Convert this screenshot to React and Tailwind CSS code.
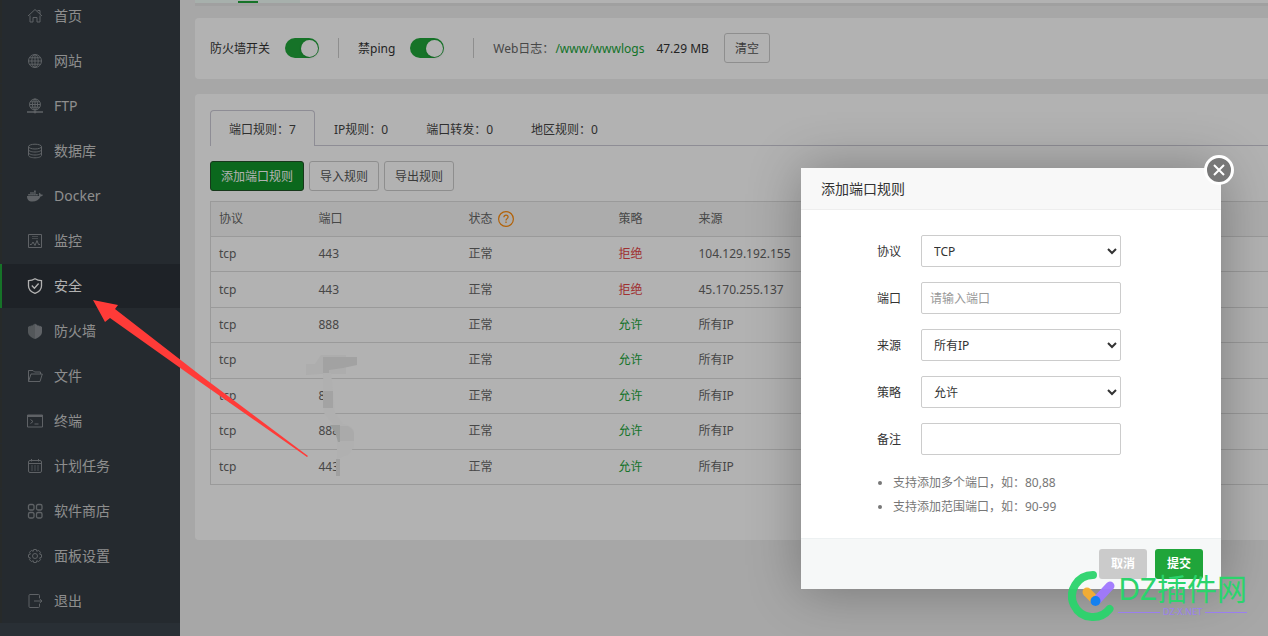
import React, {useState} from "react";
import {FaDocker} from "react-icons/fa";

const menu = [
  {name: "首页", icon: "home"},
  {name: "网站", icon: "site"},
  {name: "FTP", icon: "ftp"},
  {name: "数据库", icon: "database"},
  {name: "Docker", icon: "docker"},
  {name: "监控", icon: "monitor"},
  {name: "安全", icon: "safe", active: true},
  {name: "防火墙", icon: "firewall"},
  {name: "文件", icon: "folder"},
  {name: "终端", icon: "terminal"},
  {name: "计划任务", icon: "calendar"},
  {name: "软件商店", icon: "store"},
  {name: "面板设置", icon: "gear"},
  {name: "退出", icon: "exit"},
];

const tabs = [
  {name: "端口规则", count: 7},
  {name: "IP规则", count: 0},
  {name: "端口转发", count: 0},
  {name: "地区规则", count: 0},
];

const rules = [
  {port: "443", allow: false, source: "104.129.192.155"},
  {port: "443", allow: false, source: "45.170.255.137"},
  {port: "888", allow: true, source: "所有IP"},
  {port: "", allow: true, source: "所有IP"},
  {port: "88", allow: true, source: "所有IP"},
  {port: "888", allow: true, source: "所有IP"},
  {port: "443", allow: true, source: "所有IP"},
];

const icons = {
  home: (
    <path d="M1 8 8 1.5 15 8M10.5 2.5H13V6M3 7.5V14h3V9.5h4V14h3V7.5" />
  ),
  site: (
    <>
      <circle cx="8" cy="8" r="6.5" />
      <ellipse cx="8" cy="8" rx="3.2" ry="6.5" />
      <path d="M8 1.5v13M1.5 8h13M2.5 4.8h11M2.5 11.2h11" />
    </>
  ),
  ftp: (
    <>
      <circle cx="8" cy="6.5" r="5.5" />
      <ellipse cx="8" cy="6.5" rx="2.6" ry="5.5" />
      <path d="M8 1v11M2.5 6.5h11M3.2 3.8h9.6M3.2 9.2h9.6" />
      <path d="M0 14h16M6 14h4" strokeWidth="1.4" />
      <circle cx="8" cy="14" r="1" fill="currentColor" />
    </>
  ),
  database: (
    <>
      <ellipse cx="8" cy="3.6" rx="6.5" ry="2.4" />
      <path d="M1.5 3.6v8.8c0 1.3 2.9 2.4 6.5 2.4s6.5-1.1 6.5-2.4V3.6" />
      <path d="M1.5 6.6C1.5 7.9 4.4 9 8 9s6.5-1.1 6.5-2.4M1.5 9.6C1.5 10.9 4.4 12 8 12s6.5-1.1 6.5-2.4" />
    </>
  ),
  monitor: (
    <>
      <path d="M1.5 1.5h13v13h-13z" />
      <path d="M5 3.5h6M5 5.5h6" opacity="0.6" />
      <path d="M3 11.5h1.5l1.5-2.5 2 3.5 2-5 1.5 4H13" />
    </>
  ),
  safe: (
    <>
      <path d="M8 .8c2 1.4 4.3 1.9 6.5 1.9V8c0 3.5-3 6-6.5 7.3C4.5 14 1.5 11.5 1.5 8V2.7C3.7 2.7 6 2.2 8 .8z" strokeWidth="1.3" />
      <path d="m4.8 7.5 2.6 2.7 4.2-4.7" strokeWidth="1.3" />
    </>
  ),
  firewall: (
    <>
      <path d="M8 .5 6.5 2V1L5 3V2L3.5 3.5v-1L1 4v5c0 3 3 5.5 7 7z" fill="currentColor" stroke="none" opacity="0.8" />
      <path d="M8 .5 9.5 2V1L11 3V2l1.5 1.5v-1L15 4v5c0 3-3 5.5-7 7z" fill="currentColor" stroke="none" />
    </>
  ),
  folder: (
    <path d="M1.5 13.5v-11h4.5l1.5 1.5h6V6M1.5 13.5 4 6h11.3l-2.3 7.5z" />
  ),
  terminal: (
    <>
      <path d="M.5 2h15v12H.5z" />
      <path d="M.5 3h15" strokeWidth="2" />
      <path d="m3.5 6.5 2.5 2-2.5 2M7.5 11h4" />
    </>
  ),
  calendar: (
    <>
      <rect x="1.5" y="2.5" width="13" height="12" rx="1.5" />
      <path d="M1.5 5.5h13M4.5 1v2.5M11.5 1v2.5" />
      <path d="M4 8h8M4 10h8M4 12h8" strokeDasharray="2 1" opacity="0.7" />
    </>
  ),
  store: (
    <g strokeWidth="1.3">
      <rect x="1.5" y="1.5" width="5.5" height="5.5" rx="1.5" />
      <rect x="9.5" y="1.5" width="5.5" height="5.5" rx="1.5" />
      <rect x="1.5" y="9.5" width="5.5" height="5.5" rx="1.5" />
      <rect x="9.5" y="9.5" width="5.5" height="5.5" rx="1.5" />
    </g>
  ),
  gear: (
    <>
      <path d="m6.7 1.5h2.6l.5 1.8 1.8-.9 1.9 1.9-.9 1.8 1.9.6v2.6l-1.9.6.9 1.8-1.9 1.9-1.8-.9-.5 1.8H6.7l-.5-1.8-1.8.9-1.9-1.9.9-1.8-1.9-.6V6.7l1.9-.6-.9-1.8 1.9-1.9 1.8.9z" />
      <circle cx="8" cy="8" r="2.5" />
    </>
  ),
  exit: (
    <path d="M12.5 5V2.5q0-1-1-1h-8.5q-1 0-1 1v11q0 1 1 1h8.5q1 0 1-1V11M7 8h8M12.5 5.8 15 8l-2.5 2.2" />
  ),
};

function MenuIcon({name}) {
  if (name === "docker") return <FaDocker className="h-4 w-4" />;
  return (
    <svg viewBox="0 0 16 16" className="h-4 w-4" fill="none" stroke="currentColor" strokeWidth="1">
      {icons[name]}
    </svg>
  );
}

function Sidebar() {
  return (
    <aside className="w-[180px] shrink-0 overflow-hidden bg-[#3c444d]">
      <nav className="-mt-1.5 bg-[#353d44]">
        {menu.map((item) => (
          <a
            key={item.name}
            href="#"
            className={
              item.active
                ? "mb-px flex h-11 items-center gap-[11px] border-l-2 border-[#20a53a] bg-[#2c3138] pl-[25px] text-sm text-white"
                : "mb-px flex h-11 items-center gap-[11px] border-l-2 border-[#393d3d] pl-[25px] text-sm text-[#cccccc]"
            }
          >
            <span className={item.active ? "text-white" : "text-[#888d92]"}>
              <MenuIcon name={item.icon} />
            </span>
            {item.name}
          </a>
        ))}
      </nav>
    </aside>
  );
}

function Toggle({id, label}) {
  const [on, setOn] = useState(true);

  return (
    <div className="flex items-center gap-[15px]">
      <label htmlFor={id} className="pt-0.5">
        {label}
      </label>
      <input
        id={id}
        type="checkbox"
        checked={on}
        onChange={() => setOn(!on)}
        className="flex h-5 w-[34px] appearance-none items-center rounded-full bg-gray-300 px-px before:h-[17px] before:w-[17px] before:rounded-full before:bg-white before:shadow checked:justify-end checked:bg-[#20a53a]"
      />
    </div>
  );
}

function FirewallBar() {
  return (
    <section className="flex items-center rounded-l bg-white pt-[15px] pb-4 pl-[15px]">
      <Toggle id="firewall" label="防火墙开关" />
      <i className="mx-[19px] h-5 w-px bg-[#cccccc]" />
      <Toggle id="ping" label="禁ping" />
      <i className="mr-[19px] ml-[29px] h-5 w-px bg-[#cccccc]" />
      <span className="pt-0.5 text-[#666666]">Web日志：</span>
      <a href="#" className="mr-3 ml-px pt-0.5 text-[#20a53a]">
        /www/wwwlogs
      </a>
      <span className="pt-0.5">47.29 MB</span>
      <button className="ml-[15px] h-[30px] rounded-[3px] border border-[#cccccc] px-[10px] pt-0.5 text-[#555555]">
        清空
      </button>
    </section>
  );
}

function RuleTable() {
  return (
    <table className="mt-[10px] h-[284px] w-full table-fixed border-collapse border border-r-0 border-[#dddddd] text-left text-[#666666]">
      <thead>
        <tr className="h-[35px] border-b border-[#dddddd] bg-[#f6f6f6]">
          <th className="w-[100px] px-2 font-normal">协议</th>
          <th className="w-[150px] px-2 font-normal">端口</th>
          <th className="w-[150px] px-2 font-normal">
            <span className="flex items-center gap-[5px]">
              状态
              <svg viewBox="0 0 16 16" className="h-4 w-4" fill="none" stroke="#ff8c0a" strokeWidth="1.2">
                <circle cx="8" cy="8" r="7.4" />
                <path d="M5.9 6.3c0-1.3.9-2.1 2.1-2.1s2.1.8 2.1 1.9c0 1.5-2.1 1.6-2.1 3.3M8 10.6v1.3" />
              </svg>
            </span>
          </th>
          <th className="w-20 px-2 font-normal">策略</th>
          <th className="px-2 font-normal">来源</th>
        </tr>
      </thead>
      <tbody>
        {rules.map((rule, i) => (
          <tr key={i} className="border-b border-[#dddddd]">
            <td className="px-2">tcp</td>
            <td className="px-2">{rule.port}</td>
            <td className="px-2">正常</td>
            <td className={rule.allow ? "px-2 text-[#20a53a]" : "px-2 text-[#e64545]"}>
              {rule.allow ? "允许" : "拒绝"}
            </td>
            <td className="px-2">{rule.source}</td>
          </tr>
        ))}
      </tbody>
    </table>
  );
}

function PortRules() {
  return (
    <section className="mt-[15px] rounded-l bg-white pt-4 pb-[55px] pl-[15px]">
      <div className="flex h-9 border-b border-[#cccad6] text-[#444444]">
        {tabs.map((tab, i) => (
          <button
            key={tab.name}
            className={
              i === 0
                ? "-mb-px rounded-t border border-b-0 border-[#cccad6] bg-white px-[18px] pt-0.5"
                : "-mb-px border border-b-0 border-transparent px-[18px] pt-0.5"
            }
          >
            {tab.name}：{tab.count}
          </button>
        ))}
      </div>

      <div className="mt-[15px] flex gap-[5px] text-[#555555]">
        <button className="h-[30px] rounded-[3px] border border-[#215127] bg-[#10952a] px-[10px] pt-0.5 text-white">
          添加端口规则
        </button>
        <button className="h-[30px] rounded-[3px] border border-[#cccccc] px-[10px] pt-0.5">导入规则</button>
        <button className="h-[30px] rounded-[3px] border border-[#cccccc] px-[10px] pt-0.5">导出规则</button>
      </div>

      <RuleTable />
    </section>
  );
}

function Field({id, label, children}) {
  return (
    <div className="flex items-center gap-5">
      <label htmlFor={id} className="w-20 pt-0.5 text-right">
        {label}
      </label>
      {children}
    </div>
  );
}

function SelectField({id, label, options}) {
  return (
    <Field id={id} label={label}>
      <select id={id} className="h-8 w-[200px] rounded-xs border border-[#cccccc] bg-white px-2">
        {options.map((option) => (
          <option key={option}>{option}</option>
        ))}
      </select>
    </Field>
  );
}

function AddRuleDialog() {
  return (
    <div
      role="dialog"
      aria-labelledby="dialog-title"
      className="relative w-[420px] bg-white text-[#333333] shadow-[1px_1px_50px_rgba(0,0,0,0.3)]"
    >
      <h2 id="dialog-title" className="h-[42px] border-b border-[#eeeeee] bg-[#f8f8f8] pl-5 text-sm leading-[41px]">
        添加端口规则
      </h2>
      <button
        aria-label="关闭"
        className="absolute -top-[13px] -right-[13px] grid h-[30px] w-[30px] place-items-center rounded-full border-3 border-white bg-[#787878]"
      >
        <svg viewBox="0 0 12 12" className="h-3 w-3" stroke="#fff" strokeWidth="2">
          <path d="m1 1 10 10M11 1 1 11" />
        </svg>
      </button>

      <form>
        <div className="flex flex-col gap-[15px] pt-[25px] pl-5">
          <SelectField id="protocol" label="协议" options={["TCP", "UDP"]} />
          <Field id="port" label="端口">
            <input
              id="port"
              type="text"
              placeholder="请输入端口"
              className="h-8 w-[200px] rounded-xs border border-[#cccccc] px-2 placeholder:text-[#999999]"
            />
          </Field>
          <SelectField id="source" label="来源" options={["所有IP", "指定IP"]} />
          <SelectField id="policy" label="策略" options={["允许", "拒绝"]} />
          <Field id="remark" label="备注">
            <input id="remark" type="text" className="h-8 w-[200px] rounded-xs border border-[#cccccc] px-2" />
          </Field>
        </div>

        <ul className="mt-4 list-disc pb-[19px] pl-[92px] leading-6 text-[#777777]">
          <li>支持添加多个端口，如：80,88</li>
          <li>支持添加范围端口，如：90-99</li>
        </ul>

        <div className="flex justify-end gap-2 border-t border-[#edf1f2] bg-[#f6f8f8] py-[10px] pr-[18px] font-bold text-white">
          <button type="button" className="h-[30px] w-12 rounded-[3px] bg-[#cbcbcb]">
            取消
          </button>
          <button type="button" className="h-[30px] w-12 rounded-[3px] bg-[#20a53a]">
            提交
          </button>
        </div>
      </form>
    </div>
  );
}

function Annotations() {
  return (
    <svg width="400" height="500" className="pointer-events-none absolute top-0 left-0">
      {/* brush strokes over the hidden ports */}
      <path d="M306 364h9l6-9h25v19h-26l-14 1z" fill="#adadad" />
      <path d="M323 357h34v8l-14 3-14 2v3h-6z" fill="#a2a2a2" />
      <path d="M323 373h8l2 18 2 22 8 11q11 2 11 9v14l-6 8-11 4v-27l-5-9-8-10z" fill="#b0b0b0" />
      <path d="M323 391h10v17h-10z" fill="#a3a3a3" />
      <path d="M330 425h10v17h-2l-3-10z" fill="#9b9d9c" />
      <path d="M340 426h8q6 3 6 8v7h-14z" fill="#aaaaaa" />
      <path d="M336 459h4v17h-4z" fill="#a0a0a0" />
      <path d="M93 300 118 305 115 309 200 375 308 456 307 457 200 382 110 318 105 322z" fill="#ff3b38" />
    </svg>
  );
}

function Watermark() {
  return (
    <div className="pointer-events-none absolute right-[21px] bottom-[14px] flex items-start">
      <svg viewBox="0 0 50 52" className="h-[52px] w-[50px]" fill="none" strokeLinecap="round" opacity="0.95">
        <path d="M25 5A21 21 0 1 0 41.5 39" stroke="#2bd46c" strokeWidth="8" />
        <path d="m19 22 9 9" stroke="#f7ae31" strokeWidth="9" />
        <path d="m28 31 14-15" stroke="#a078ff" strokeWidth="9" />
        <circle cx="27.5" cy="31" r="5" fill="#0d80f5" />
      </svg>
      <div className="pt-px">
        <div className="text-[30px] leading-9 text-[#2bd46c]">DZ插件网</div>
        <div className="flex items-center gap-[3px] text-[9px] leading-[10px] text-[#9a7ff0]">
          <i className="h-px flex-1 bg-[#9a7ff0]" />
          DZ-X.NET
          <i className="h-px flex-1 bg-[#9a7ff0]" />
        </div>
      </div>
    </div>
  );
}

function App() {
  return (
    <div className="relative flex min-h-screen bg-[#f0f0f0] font-['Noto_Sans','Noto_Sans_CJK_SC',sans-serif] text-xs text-[#333333]">
      <Sidebar />

      <main className="min-w-0 flex-1 pl-[15px]">
        <div className="mb-[15px] h-[3px] bg-white shadow-[0_3px_0_#e6e6e6]">
          <div className="h-full w-[105px] bg-[#f0fdf7] pt-px pl-[43px]">
            <div className="h-0.5 w-5 bg-[#20a53a]" />
          </div>
        </div>
        <FirewallBar />
        <PortRules />
      </main>

      <div className="absolute inset-0 flex items-start justify-end overflow-hidden bg-black/30 pt-[168px] pr-[47px]">
        <AddRuleDialog />
      </div>
      <Annotations />
      <Watermark />
    </div>
  );
}

export default App;
